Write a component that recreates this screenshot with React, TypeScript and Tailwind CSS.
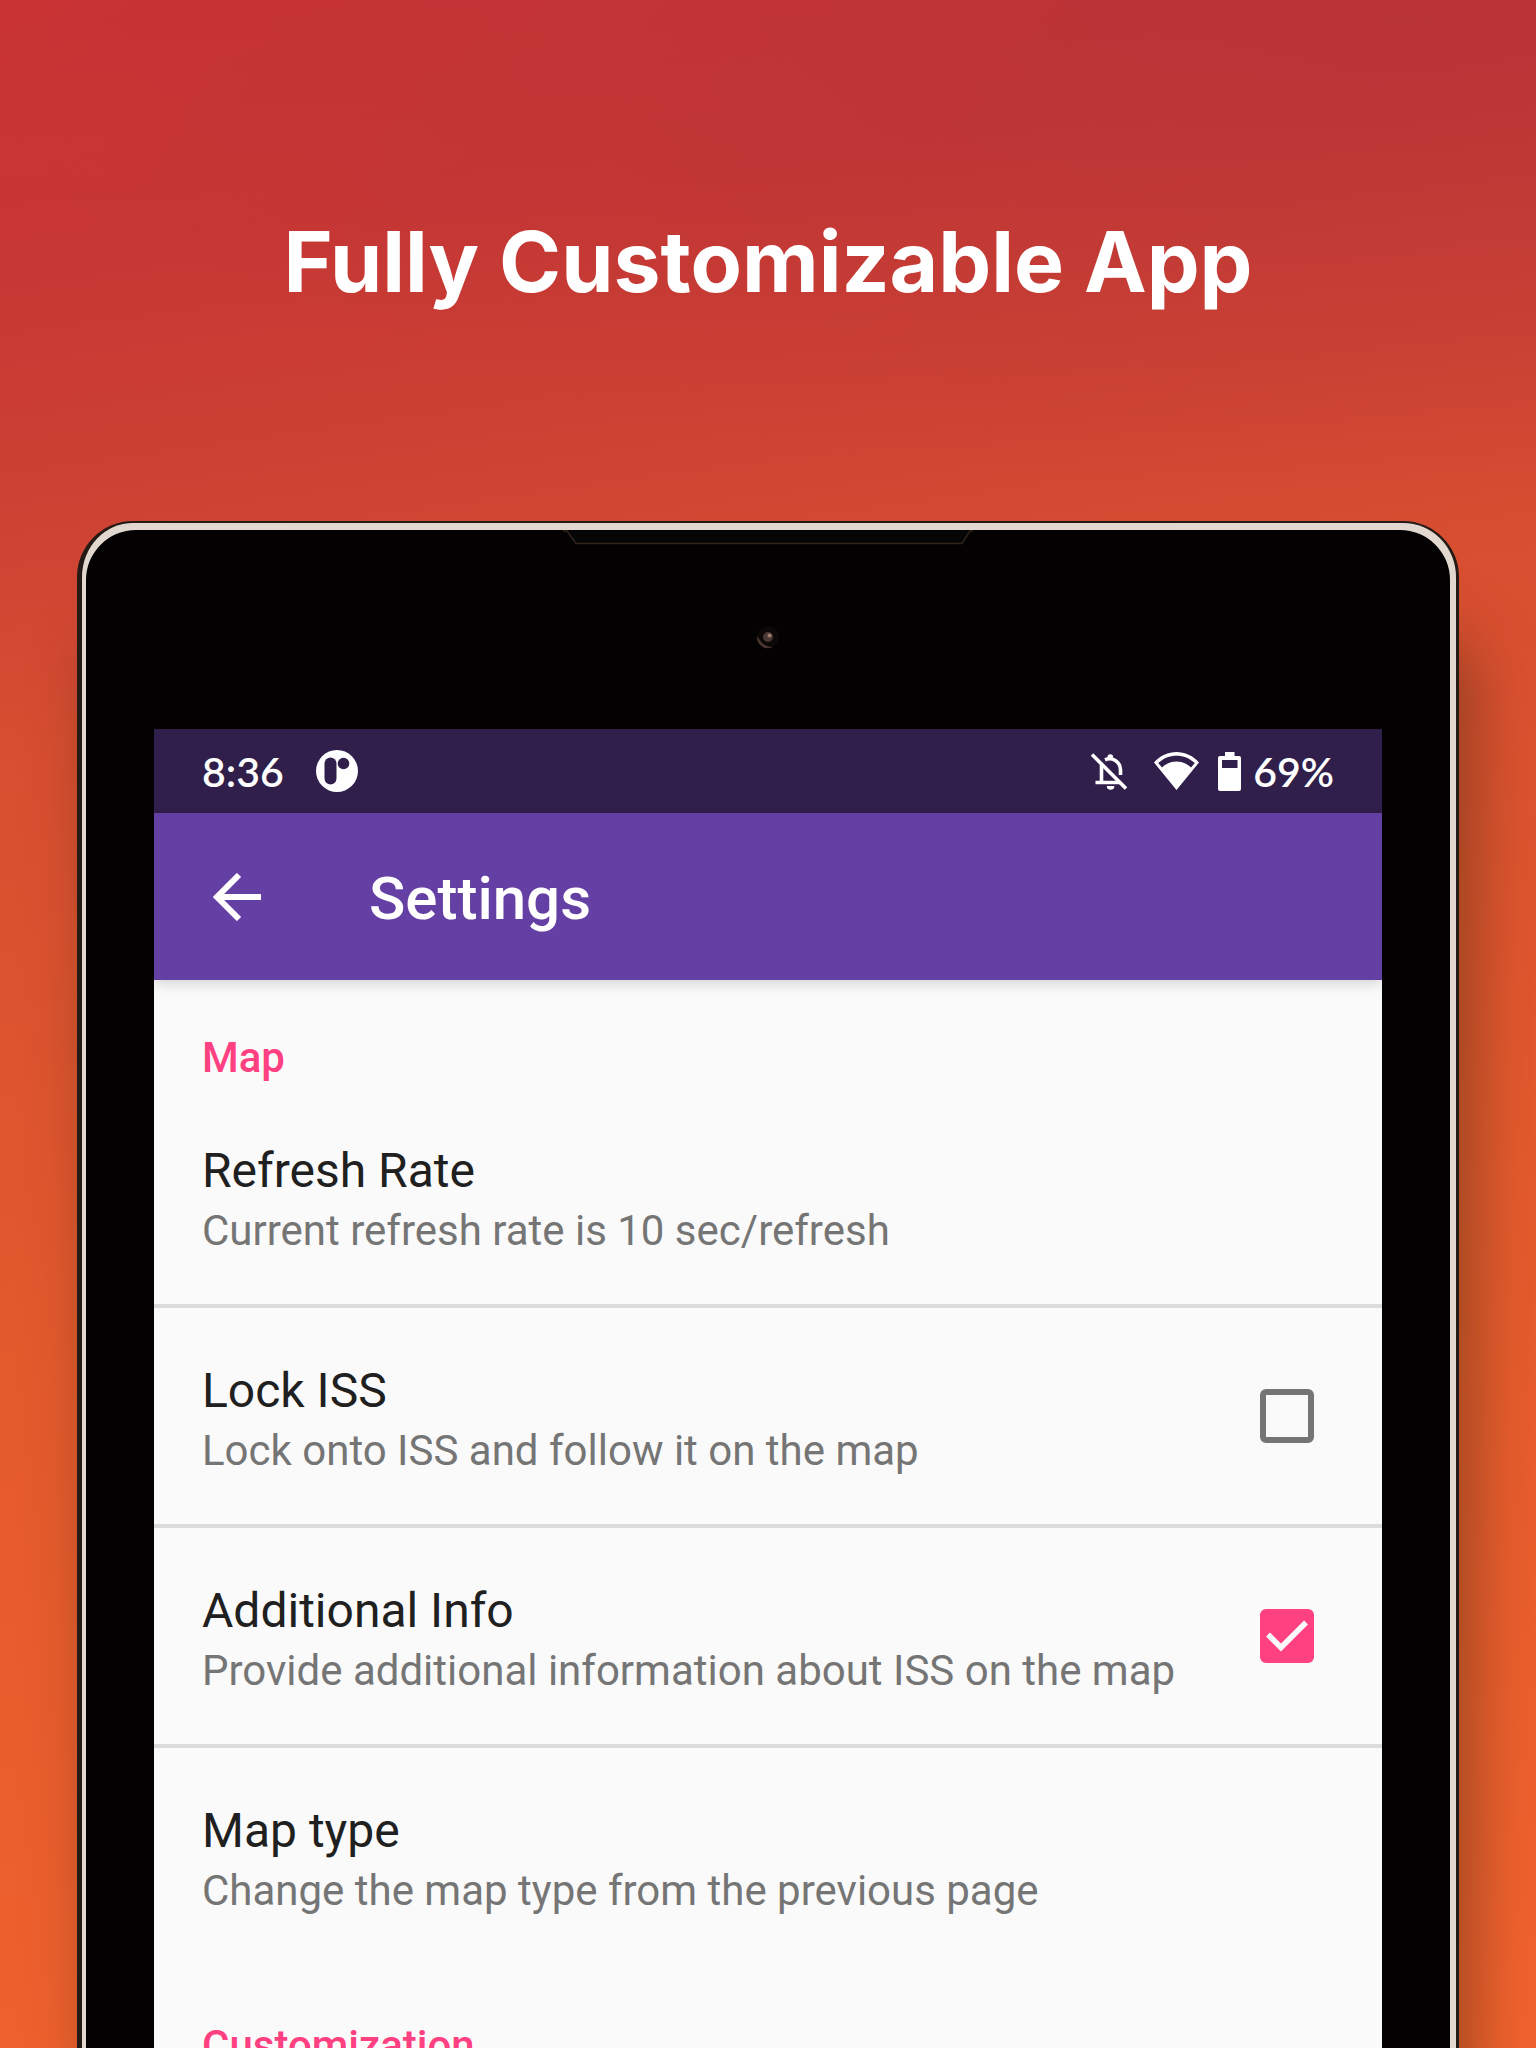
import { useState } from "react";

type RowProps = { title: string; summary: string };

function BellOff() {
  return (
    <svg viewBox="0 0 36 37" className="h-[37px] w-[36px]" fill="none" stroke="#fff" strokeWidth="3.6">
      <path d="M1 1.5 35 35.5" />
      <path d="M10.5 12v17M4.500 29.500H29M14 6.800a11 11 0 0 1 15.500 9.700V22" />
      <path d="M16.500 6.500V4a2.800 2.800 0 0 1 5.600 0v3.500z" fill="#fff" stroke="none" />
      <path d="M15.800 33h7.600a3.800 3.800 0 0 1-7.600 0z" fill="#fff" stroke="none" />
    </svg>
  );
}

function Wifi() {
  return (
    <svg viewBox="0 0 45 38" className="h-[38px] w-[45px]" fill="#fff">
      <path fillRule="evenodd" d="M0 10.500C12-3.500 33-3.500 45 10.500L22.500 38zM4.200 11 8 15.600C16 7.500 29 7.500 37 15.600L40.800 11C30.500 1.200 14.500 1.200 4.200 11z" />
    </svg>
  );
}

function Battery() {
  return (
    <svg viewBox="0 0 23 39" className="h-[39px] w-[23px]" fill="#fff">
      <path fillRule="evenodd" d="M7 0h9.500v4H21a2 2 0 0 1 2 2v31a2 2 0 0 1-2 2H2a2 2 0 0 1-2-2V6a2 2 0 0 1 2-2h5zM4 8v8h15.500V8z" />
    </svg>
  );
}

function AppBadge() {
  return (
    <svg viewBox="0 0 42 42" className="h-[42px] w-[42px]">
      <circle cx="21" cy="21" r="21" fill="#fff" />
      <rect x="8.500" y="7.500" width="12" height="27" rx="6" fill="#301e4b" />
      <circle cx="27.500" cy="13.500" r="5.800" fill="#301e4b" />
    </svg>
  );
}

function Row({ title, summary }: RowProps) {
  return (
    <span className="flex min-w-0 flex-1 flex-col pt-[10px]">
      <span className="text-[48px] leading-[60px] text-[#202020]">{title}</span>
      <span className="text-[42px] leading-[60px] text-[#757575]">{summary}</span>
    </span>
  );
}

function CheckRow({ title, summary, initial }: RowProps & { initial: boolean }) {
  const [on, setOn] = useState(initial);
  return (
    <label className="flex h-[220px] items-center border-t-4 border-[#dcdcdc] pr-[68px] pl-12">
      <Row title={title} summary={summary} />
      <span className="grid">
        <input
          type="checkbox"
          checked={on}
          onChange={() => setOn(!on)}
          className="col-start-1 row-start-1 size-[54px] appearance-none rounded-[6px] border-6 border-[#757575] checked:border-[#ff4081] checked:bg-[#ff4081]"
        />
        {on && (
          <svg viewBox="0 0 54 54" className="pointer-events-none col-start-1 row-start-1 size-[54px]" fill="none" stroke="#fafafa" strokeWidth="5.500">
            <path d="M8 25.500 21 38.500 46 13.500" />
          </svg>
        )}
      </span>
    </label>
  );
}

export default function App() {
  return (
    <div className="flex h-screen flex-col overflow-hidden bg-[radial-gradient(95%_24%_at_90%_0%,rgba(165,48,60,0.42),transparent),linear-gradient(172deg,#ca3334_0%,#c73734_12%,#cd4233_23%,#d74e31_33%,#e35a2d_60%,#f2632e_100%)] font-[Roboto,sans-serif]">
      <h1 className="pt-[210px] text-center font-[Inter,sans-serif] text-[84px] leading-[104px] font-bold whitespace-nowrap text-white">
        Fully Customizable App
      </h1>
      <main className="mx-[77px] mt-[207px] flex min-h-0 flex-1 flex-col rounded-t-[56px] border-t-2 border-r-3 border-l-5 border-[#241a16] bg-[#e3d8d0] pt-[7px] pr-[6px] pl-1 shadow-[16px_110px_60px_0px_rgba(85,45,20,0.5)]">
        <div className="flex min-h-0 flex-1 flex-col rounded-t-[50px] bg-[#030102] px-[68px]">
          <div className="flex h-[199px] flex-col items-center">
            <svg viewBox="0 0 410 16" className="h-4 w-[410px]" fill="#070606" stroke="#30231b" strokeWidth="1.500">
              <path d="M0 1h4l9 12.500h386L407 1h3" />
            </svg>
            <svg viewBox="0 0 24 24" className="mt-[79px] size-6">
              <circle cx="12" cy="12" r="11" fill="#0b0807" />
              <path d="M1 11a11 11 0 0 0 16 11C8 22 5 17 1 11z" fill="#49362f" />
              <circle cx="12" cy="12" r="5" fill="#4b3832" />
              <circle cx="13.500" cy="10.500" r="2" fill="#a07e70" />
            </svg>
          </div>
          <div className="flex min-h-0 flex-1 flex-col overflow-hidden bg-[#fafafa]">
            <div className="flex h-[84px] shrink-0 items-center bg-[#301e4b] px-12 font-[Lato,sans-serif] text-[41px] leading-[52px] font-semibold text-white">
              <span className="pt-[2px]">8:36</span>
              <span className="ml-8"><AppBadge /></span>
              <span className="ml-auto flex items-center">
                <BellOff />
                <span className="ml-[27px]"><Wifi /></span>
                <span className="mr-3 ml-[19px]"><Battery /></span>
                <span className="pt-[2px]">69%</span>
              </span>
            </div>
            <header className="flex h-[167px] shrink-0 items-center bg-[#6540a4] pl-[59px] text-white shadow-[0_4px_12px_rgba(0,0,0,0.15)]">
              <button type="button" aria-label="Back">
                <svg viewBox="0 0 48 48" className="size-12" fill="none" stroke="#fff" strokeWidth="6">
                  <path d="M48 24H5M26 2 4 24l22 22" />
                </svg>
              </button>
              <h2 className="ml-[108px] pt-1 text-[60px] leading-[72px] font-medium">Settings</h2>
            </header>
            <section>
              <h3 className="px-12 pt-12 text-[42px] leading-[60px] font-medium text-[#ff4081]">Map</h3>
              <button type="button" className="flex h-[216px] w-full items-center px-12 text-left">
                <Row title="Refresh Rate" summary="Current refresh rate is 10 sec/refresh" />
              </button>
              <CheckRow title="Lock ISS" summary="Lock onto ISS and follow it on the map" initial={false} />
              <CheckRow title="Additional Info" summary="Provide additional information about ISS on the map" initial={true} />
              <button type="button" className="flex h-[220px] w-full items-center border-t-4 border-[#dcdcdc] px-12 text-left">
                <Row title="Map type" summary="Change the map type from the previous page" />
              </button>
            </section>
            <section>
              <h3 className="px-12 pt-[52px] text-[42px] leading-[60px] font-medium text-[#ff4081]">Customization</h3>
            </section>
          </div>
        </div>
      </main>
    </div>
  );
}
